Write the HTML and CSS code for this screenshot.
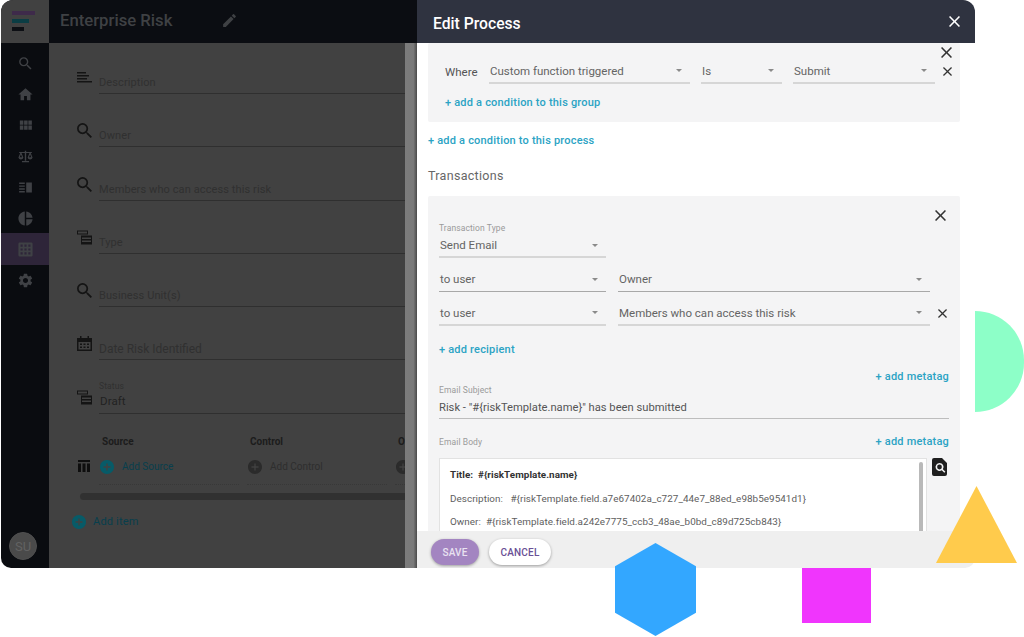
FILE: index.html
```html
<!DOCTYPE html>
<html lang="en">
<head>
    <meta charset="UTF-8">
    <meta name="viewport" content="width=device-width, initial-scale=1.0">
    <title>Edit Process</title>
    <link rel="stylesheet" href="styles.css">
</head>
<body>

    <!-- shared icons -->
    <svg class="icon-defs" width="0" height="0">
        <symbol id="i-search" viewBox="0 0 24 24"><path d="M15.5 14h-.79l-.28-.27A6.471 6.471 0 0 0 16 9.5 6.5 6.5 0 1 0 9.5 16c1.61 0 3.09-.59 4.23-1.57l.27.28v.79l5 4.99L20.49 19l-4.99-5zm-6 0C7.01 14 5 11.99 5 9.5S7.01 5 9.5 5 14 7.01 14 9.5 11.99 14 9.5 14z"/></symbol>
        <symbol id="i-search-tight" viewBox="3 3 17.5 17.5"><path d="M15.5 14h-.79l-.28-.27A6.471 6.471 0 0 0 16 9.5 6.5 6.5 0 1 0 9.5 16c1.61 0 3.09-.59 4.23-1.57l.27.28v.79l5 4.99L20.49 19l-4.99-5zm-6 0C7.01 14 5 11.99 5 9.5S7.01 5 9.5 5 14 7.01 14 9.5 11.99 14 9.5 14z"/></symbol>
        <symbol id="i-home" viewBox="0 0 24 24"><path d="M10 20v-6h4v6h5v-8h3L12 3 2 12h3v8z"/></symbol>
        <symbol id="i-module" viewBox="0 0 24 24"><path d="M4 11h5V5H4v6zm0 7h5v-6H4v6zm6 0h5v-6h-5v6zm6 0h5v-6h-5v6zm-6-7h5V5h-5v6zm6-6v6h5V5h-5z"/></symbol>
        <symbol id="i-scale" viewBox="0 0 24 24"><path d="M11 4h2v1.5h8V7h-1.6l2.6 6.5a3.6 3.6 0 0 1-7 0L17.600 7H13v11h-2V7H6.400L9 13.500a3.600 3.600 0 0 1-7 0L4.600 7H3V5.500h8V4zM5.500 9 3.900 13h3.200L5.500 9zm13 0-1.600 4h3.200l-1.600-4zM7 18.500h10V20H7z"/></symbol>
        <symbol id="i-book" viewBox="0 0 24 24"><path d="M3 5h8v2H3zm0 4h8v2H3zm0 4h8v2H3zm0 4h8v2H3zM13 5h8v14h-8z"/></symbol>
        <symbol id="i-pie" viewBox="0 0 24 24"><path d="M11 2v20c-5.070-.5-9-4.790-9-10s3.930-9.500 9-10zm2.030 0v8.990H22c-.470-4.740-4.240-8.520-8.970-8.990zm0 11.010V22c4.740-.470 8.500-4.250 8.970-8.990h-8.970z"/></symbol>
        <symbol id="i-grid" viewBox="0 0 24 24"><path fill-rule="evenodd" d="M4 2h16a2 2 0 0 1 2 2v16a2 2 0 0 1-2 2H4a2 2 0 0 1-2-2V4a2 2 0 0 1 2-2zm1 3v3h3V5H5zm5.500 0v3h3V5h-3zM16 5v3h3V5h-3zM5 10.500v3h3v-3H5zm5.500 0v3h3v-3h-3zm5.500 0v3h3v-3h-3zM5 16v3h3v-3H5zm5.500 0v3h3v-3h-3zm5.500 0v3h3v-3h-3z"/></symbol>
        <symbol id="i-gear" viewBox="0 0 24 24"><path d="M19.140 12.940c.04-.3.06-.61.06-.94 0-.32-.02-.64-.07-.94l2.030-1.580a.49.49 0 0 0 .12-.61l-1.920-3.320a.488.488 0 0 0-.59-.29l-2.390.96c-.5-.38-1.030-.7-1.620-.94l-.36-2.540a.484.484 0 0 0-.48-.41h-3.840c-.24 0-.43.17-.47.41l-.36 2.540c-.59.24-1.130.57-1.620.94l-2.390-.96c-.22-.08-.47 0-.59.22L2.740 8.870c-.12.21-.08.47.12.61l2.030 1.580c-.05.3-.09.63-.09.94s.02.64.07.94l-2.030 1.580a.49.49 0 0 0-.12.61l1.920 3.320c.12.22.37.29.59.22l2.390-.96c.5.38 1.030.7 1.620.94l.36 2.540c.05.24.24.41.48.41h3.840c.24 0 .44-.17.47-.41l.36-2.540c.59-.24 1.130-.56 1.620-.94l2.390.96c.22.08.47 0 .59-.22l1.920-3.320c.12-.22.07-.47-.12-.61l-2.010-1.580zM12 15.600c-1.980 0-3.600-1.620-3.600-3.600s1.620-3.600 3.600-3.600 3.600 1.620 3.600 3.600-1.620 3.600-3.600 3.600z"/></symbol>
        <symbol id="i-edit" viewBox="0 0 24 24"><path d="M3 17.250V21h3.750L17.810 9.940l-3.750-3.750L3 17.250zM20.710 7.040a.996.996 0 0 0 0-1.410l-2.340-2.340a.996.996 0 0 0-1.410 0l-1.830 1.830 3.750 3.750 1.830-1.830z"/></symbol>
        <symbol id="i-close" viewBox="5 5 14 14"><path d="M19 6.410 17.590 5 12 10.590 6.410 5 5 6.410 10.590 12 5 17.590 6.410 19 12 13.410 17.590 19 19 17.590 13.410 12z"/></symbol>
        <symbol id="i-add" viewBox="2 2 20 20"><path d="M12 2C6.480 2 2 6.480 2 12s4.480 10 10 10 10-4.480 10-10S17.520 2 12 2zm5 11h-4v4h-2v-4H7v-2h4V7h2v4h4v2z"/></symbol>
        <symbol id="i-lines" viewBox="0 0 15 15"><path d="M0 2h9v1.500H0zM0 5h12v1.500H0zM0 8h10v1.500H0zM0 11h15v1.500H0z"/></symbol>
        <symbol id="i-stack" viewBox="0 0 15 14"><path d="M0 0h11v4H0zm1 1v2h9V1zM4 5h11v9H4zm1 2v1.500h9V7zm0 3v1.500h9V10z" fill-rule="evenodd"/></symbol>
        <symbol id="i-calendar" viewBox="0 0 15 15"><path fill-rule="evenodd" d="M3 0h1.500v2h6V0H12v2h3v13H0V2h3zM1.500 6v7.500h12V6zM3 7.500h2V9H3zm3.500 0h2V9h-2zm3.500 0h2V9h-2zM3 10.500h2V12H3zm3.500 0h2V12h-2zm3.500 0h2V12h-2z"/></symbol>
        <symbol id="i-columns" viewBox="0 0 12 12"><path d="M0 0h12v2H0zM0 3.500h3V12H0zM4.500 3.500h3V12h-3zM9 3.500h3V12H9z"/></symbol>
    </svg>

    <div class="app">
        <!-- left nav -->
        <nav class="sidebar">
            <div class="logo">
                <span class="logo-bar logo-bar-1"></span>
                <span class="logo-bar logo-bar-2"></span>
                <span class="logo-bar logo-bar-3"></span>
            </div>
            <div class="nav-list">
                <div class="nav-item"><svg class="nav-icon"><use href="#i-search"/></svg></div>
                <div class="nav-item"><svg class="nav-icon"><use href="#i-home"/></svg></div>
                <div class="nav-item"><svg class="nav-icon"><use href="#i-module"/></svg></div>
                <div class="nav-item"><svg class="nav-icon"><use href="#i-scale"/></svg></div>
                <div class="nav-item"><svg class="nav-icon"><use href="#i-book"/></svg></div>
                <div class="nav-item"><svg class="nav-icon"><use href="#i-pie"/></svg></div>
                <div class="nav-item active"><svg class="nav-icon"><use href="#i-grid"/></svg></div>
                <div class="nav-item"><svg class="nav-icon"><use href="#i-gear"/></svg></div>
            </div>
            <div class="avatar">SU</div>
        </nav>

        <!-- page behind the dialog -->
        <div class="page">
            <header class="page-head">
                <h1 class="page-title">Enterprise Risk</h1>
                <svg class="page-edit"><use href="#i-edit"/></svg>
            </header>
            <div class="page-body">
                <main class="form">
                    <div class="field">
                        <svg class="field-icon"><use href="#i-lines"/></svg>
                        <div class="field-input">Description</div>
                    </div>
                    <div class="field">
                        <svg class="field-icon"><use href="#i-search-tight"/></svg>
                        <div class="field-input">Owner</div>
                    </div>
                    <div class="field">
                        <svg class="field-icon"><use href="#i-search-tight"/></svg>
                        <div class="field-input">Members who can access this risk</div>
                    </div>
                    <div class="field">
                        <svg class="field-icon"><use href="#i-stack"/></svg>
                        <div class="field-input">Type</div>
                    </div>
                    <div class="field">
                        <svg class="field-icon"><use href="#i-search-tight"/></svg>
                        <div class="field-input">Business Unit(s)</div>
                    </div>
                    <div class="field">
                        <svg class="field-icon"><use href="#i-calendar"/></svg>
                        <div class="field-input large">Date Risk Identified</div>
                    </div>
                    <div class="field">
                        <svg class="field-icon"><use href="#i-stack"/></svg>
                        <div class="field-input filled">
                            <span class="field-label">Status</span>
                            <span class="field-value">Draft</span>
                        </div>
                    </div>

                    <div class="items">
                        <svg class="items-icon"><use href="#i-columns"/></svg>
                        <div class="item-col">
                            <div class="item-head">Source</div>
                            <div class="item-add"><svg class="add-icon"><use href="#i-add"/></svg>Add Source</div>
                        </div>
                        <div class="item-col off">
                            <div class="item-head">Control</div>
                            <div class="item-add"><svg class="add-icon"><use href="#i-add"/></svg>Add Control</div>
                        </div>
                        <div class="item-col off">
                            <div class="item-head">Owner</div>
                            <div class="item-add"><svg class="add-icon"><use href="#i-add"/></svg>Add Owner</div>
                        </div>
                    </div>
                    <div class="items-scroll"></div>
                    <div class="add-item"><svg class="add-icon"><use href="#i-add"/></svg>Add item</div>
                </main>
                <div class="page-scroll"></div>
            </div>
        </div>

        <!-- dialog -->
        <section class="dialog">
            <header class="dialog-head">
                <h2 class="dialog-title">Edit Process</h2>
                <svg class="x-icon x-white"><use href="#i-close"/></svg>
            </header>

            <div class="dialog-body">
                <div class="panel panel-where">
                    <div class="panel-close"><svg class="x-icon"><use href="#i-close"/></svg></div>
                    <div class="where-row">
                        <span class="where-label">Where</span>
                        <div class="select w-201"><span>Custom function triggered</span><i class="caret"></i></div>
                        <div class="select w-81"><span>Is</span><i class="caret"></i></div>
                        <div class="select w-142"><span>Submit</span><i class="caret"></i></div>
                        <svg class="x-icon x-small"><use href="#i-close"/></svg>
                    </div>
                    <a class="link link-group">+ add a condition to this group</a>
                </div>

                <a class="link link-process">+ add a condition to this process</a>
                <h3 class="section-title">Transactions</h3>

                <div class="panel panel-tx">
                    <div class="panel-close tx-close"><svg class="x-icon"><use href="#i-close"/></svg></div>
                    <div class="small-label">Transaction Type</div>
                    <div class="select w-167 tx-type"><span>Send Email</span><i class="caret"></i></div>
                    <div class="tx-row">
                        <div class="select w-167 dark"><span>to user</span><i class="caret"></i></div>
                        <div class="select w-312 dark"><span>Owner</span><i class="caret"></i></div>
                    </div>
                    <div class="tx-row">
                        <div class="select w-167"><span>to user</span><i class="caret"></i></div>
                        <div class="select w-312"><span>Members who can access this risk</span><i class="caret"></i></div>
                        <svg class="x-icon x-small"><use href="#i-close"/></svg>
                    </div>
                    <a class="link link-recipient">+ add recipient</a>
                    <div class="meta-row"><a class="link">+ add metatag</a></div>
                    <div class="small-label">Email Subject</div>
                    <div class="subject">Risk - "#{riskTemplate.name}" has been submitted</div>
                    <div class="body-label-row">
                        <span class="small-label">Email Body</span>
                        <a class="link">+ add metatag</a>
                    </div>
                    <div class="editor-row">
                        <div class="editor">
                            <p class="editor-title">Title:&nbsp; #{riskTemplate.name}</p>
                            <p>Description:&nbsp;&nbsp; #{riskTemplate.field.a7e67402a_c727_44e7_88ed_e98b5e9541d1}</p>
                            <p>Owner:&nbsp; #{riskTemplate.field.a242e7775_ccb3_48ae_b0bd_c89d725cb843}</p>
                            <div class="editor-scroll"></div>
                        </div>
                        <svg class="preview-icon" viewBox="0 0 15 18"><path fill-rule="evenodd" d="M2 0h8l5 5v11a2 2 0 0 1-2 2H2a2 2 0 0 1-2-2V2a2 2 0 0 1 2-2zm5.500 5a4 4 0 1 0 2.300 7.300l2.500 2.500 1.100-1.100-2.500-2.500A4 4 0 0 0 7.500 5zm0 1.600a2.400 2.400 0 1 1 0 4.800 2.400 2.400 0 0 1 0-4.800z"/></svg>
                    </div>
                </div>
            </div>

            <footer class="dialog-foot">
                <button class="btn btn-save">SAVE</button>
                <button class="btn btn-cancel">CANCEL</button>
            </footer>
        </section>
    </div>

    <!-- decorative shapes around the screenshot -->
    <div class="shape shape-half"></div>
    <div class="shape shape-hex"></div>
    <div class="shape shape-square"></div>
    <div class="shape shape-tri"></div>

</body>
</html>
```

FILE: styles.css
```css
:root {
    --color-link: #2ba3c4;
    --color-panel: #f4f4f5;
    --color-text: #616161;
    --color-page: #414141;
    --font-family: Roboto, "Liberation Sans", Arial, sans-serif;
}

html, body {
    margin: 0;
    height: 100%;
    overflow: hidden;
    background-color: #fff;
    font-family: var(--font-family);
}

.icon-defs {
    display: block;
}

.app {
    display: flex;
    width: 974px;
    height: 568px;
    margin-left: 1px;
    overflow: hidden;
    border-radius: 12px 12px 10px 10px;
}

/* --- sidebar --- */
.sidebar {
    display: flex;
    flex-direction: column;
    flex-shrink: 0;
    width: 48px;
    background-color: #0a0c10;
}

.logo {
    display: flex;
    flex-direction: column;
    gap: 4px;
    height: 43px;
    padding: 11px 0 0 11px;
    box-sizing: border-box;
    background-color: #414141;
}

.logo-bar {
    display: block;
    height: 4px;
}
.logo-bar-1 { width: 23px; background-color: #3e2a4a; }
.logo-bar-2 { width: 17px; background-color: #0b3d44; }
.logo-bar-3 { width: 12px; background-color: #0d0f14; }

.nav-list {
    padding-top: 5px;
}

.nav-item {
    display: flex;
    align-items: center;
    justify-content: center;
    height: 31px;
}
.nav-item.active {
    height: 32px;
    margin-top: -1px;
    background-color: #2e2539;
}

.nav-icon {
    width: 17px;
    height: 17px;
    fill: #3f4145;
}

.avatar {
    display: flex;
    align-items: center;
    justify-content: center;
    width: 28px;
    height: 28px;
    margin: auto 0 8px 8px;
    border-radius: 50%;
    background-color: #4a4a4a;
    border: 1px solid #505050;
    box-sizing: border-box;
    color: #626262;
    font-size: 13px;
}

/* --- page behind the dialog --- */
.page {
    display: flex;
    flex-direction: column;
    width: 368px;
    flex-shrink: 0;
    background-color: var(--color-page);
}

.page-head {
    display: flex;
    align-items: center;
    height: 43px;
    padding: 0 0 2px 11px;
    box-sizing: border-box;
    flex-shrink: 0;
    background-color: #0b0d12;
}

.page-title {
    width: 161px;
    margin: 0;
    color: #3f4144;
    font-size: 16.700px;
    font-weight: 500;
}

.page-edit {
    width: 17px;
    height: 17px;
    fill: #3f4144;
}

.page-body {
    display: flex;
    flex: 1;
    min-height: 0;
}

.form {
    width: 356px;
    padding: 8px 0 0 28px;
    box-sizing: border-box;
    overflow: hidden;
    flex-shrink: 0;
}

.page-scroll {
    width: 12px;
    background: linear-gradient(90deg, #7c7c7c 0, #7a7a7a 70%, #4a4a4a 100%);
}

.field {
    display: flex;
    align-items: flex-end;
    height: 43px;
    margin-bottom: 10.250px;
}

.field-icon {
    flex-shrink: 0;
    width: 15px;
    height: 15px;
    margin: 0 7px 9px 0;
    fill: #141414;
}

.field-input {
    flex: 1;
    padding-bottom: 4px;
    border-bottom: 1px solid #2f2f2f;
    color: #303030;
    font-size: 11px;
    letter-spacing: 0.1px;
    white-space: nowrap;
}
.field-input.large {
    padding-bottom: 3px;
    font-size: 12px;
    letter-spacing: 0;
}

.field-input.filled {
    display: flex;
    flex-direction: column;
    padding-bottom: 5px;
    color: #222;
}

.field-label {
    margin-bottom: 3px;
    font-size: 8.500px;
    color: #303030;
}

.field-value {
    padding-left: 1px;
    font-size: 11.500px;
}

.items {
    display: flex;
    margin-top: 22px;
    width: 400px;
}

.items-icon {
    flex-shrink: 0;
    width: 12px;
    height: 12px;
    margin: 24px 9px 0 1px;
    fill: #0e0e0e;
}

.item-col {
    flex-shrink: 0;
    width: 140px;
    margin-right: 8px;
    border-bottom: 1px dotted #383838;
    height: 49px;
    box-sizing: border-box;
}

.item-head {
    padding-left: 3px;
    color: #1c1c1c;
    font-size: 10px;
    font-weight: 700;
}

.item-add {
    display: flex;
    align-items: center;
    gap: 8px;
    margin-top: 13px;
    padding-left: 1px;
    color: #083f4d;
    font-size: 10px;
}

.item-col.off .item-add {
    color: #2e2e2e;
}

.add-icon {
    flex-shrink: 0;
    width: 14px;
    height: 14px;
    fill: #075b68;
}

.item-col.off .add-icon {
    fill: #2b2b2b;
}

.items-scroll {
    height: 7px;
    margin: 8px -1px 0 3px;
    border-radius: 4px 0 0 4px;
    background-color: #313131;
}

.add-item {
    display: flex;
    align-items: center;
    gap: 7px;
    margin: 15px 0 0 -5px;
    color: #083f4d;
    font-size: 11px;
    letter-spacing: 0.2px;
}

/* --- dialog --- */
.dialog {
    display: flex;
    flex-direction: column;
    flex: 1;
    min-width: 0;
    background-color: #fff;
}

.dialog-head {
    display: flex;
    align-items: center;
    justify-content: space-between;
    flex-shrink: 0;
    height: 43px;
    padding: 0 15px 0 16px;
    box-sizing: border-box;
    background-color: #2f3340;
}

.dialog-title {
    margin: 4px 0 0;
    color: #fff;
    font-size: 15.700px;
    font-weight: 500;
}

.x-icon {
    display: block;
    flex-shrink: 0;
    width: 11px;
    height: 11px;
    fill: #333;
}
.x-white {
    fill: #fff;
}
.x-small {
    width: 9px;
    height: 9px;
}

.dialog-body {
    flex: 1;
    min-height: 0;
    padding: 0 15px 0 11px;
    overflow: hidden;
}

.panel {
    border-radius: 2px;
    background-color: var(--color-panel);
}

.panel-where {
    height: 79px;
    padding-left: 17px;
    box-sizing: border-box;
}

.panel-close {
    display: flex;
    justify-content: flex-end;
    height: 12px;
    padding: 4px 8px 0 0;
}

.where-row {
    display: flex;
    align-items: center;
    gap: 11px;
}

.where-label {
    width: 33px;
    color: #555;
    font-size: 11.500px;
}

.where-row .x-small {
    margin: 0 0 0 -3px;
}

.select {
    display: flex;
    align-items: center;
    justify-content: space-between;
    flex-shrink: 0;
    height: 25px;
    padding: 0 8px 0 1px;
    box-sizing: border-box;
    border-bottom: 2px solid #d6d6d6;
    color: #646464;
    font-size: 11.500px;
    white-space: nowrap;
}
.select.dark {
    border-bottom: 1px solid #a8a8a8;
}

.w-201 { width: 201px; }
.w-81 { width: 81px; }
.w-142 { width: 142px; }
.w-167 { width: 167px; }
.w-312 { width: 312px; }

.caret {
    display: block;
    width: 0;
    height: 0;
    border-left: 3.500px solid transparent;
    border-right: 3.500px solid transparent;
    border-top: 3.500px solid #8a8a8a;
}

.link {
    display: block;
    height: 14px;
    color: var(--color-link);
    font-size: 11px;
    font-weight: 500;
    line-height: 14px;
    letter-spacing: 0.2px;
    white-space: nowrap;
}

.link-group {
    margin-top: 12px;
}

.link-process {
    margin-top: 12px;
}

.section-title {
    height: 16px;
    margin: 20px 0 12px;
    color: #666;
    font-size: 12.500px;
    font-weight: 400;
    line-height: 16px;
    letter-spacing: 0.3px;
}

.panel-tx {
    padding: 0 11px;
    height: 400px;
}

.tx-close {
    height: 12px;
    padding: 14px 3px 0 0;
}

.small-label {
    height: 12px;
    color: #9a9a9a;
    font-size: 8.500px;
    line-height: 12px;
    letter-spacing: 0.1px;
}

.tx-type {
    height: 24px;
}

.tx-row {
    display: flex;
    align-items: center;
    gap: 12px;
    margin-top: 9px;
}

.tx-row .x-small {
    margin-left: -4px;
}

.link-recipient {
    margin-top: 17px;
}

.meta-row {
    display: flex;
    justify-content: flex-end;
    margin-top: 13px;
}

.subject {
    height: 23px;
    box-sizing: border-box;
    border-bottom: 1px solid #bdbdbd;
    color: #555;
    font-size: 11.200px;
    line-height: 24px;
    white-space: nowrap;
}

.body-label-row {
    display: flex;
    align-items: center;
    justify-content: space-between;
    height: 16px;
    margin-top: 15px;
}

.editor-row {
    display: flex;
    gap: 5px;
    margin-top: 8px;
}

.editor {
    position: relative;
    width: 488px;
    height: 120px;
    padding: 9px 10px;
    box-sizing: border-box;
    border: 1px solid #e2e2e2;
    background-color: #fff;
    color: #5e5e5e;
    font-size: 9.900px;
    letter-spacing: 0.05px;
}

.editor p {
    height: 13px;
    margin: 0 0 10.500px;
    line-height: 13px;
    white-space: nowrap;
}

.editor p.editor-title {
    color: #333;
    font-weight: 700;
}

.editor-scroll {
    position: absolute;
    top: 3px;
    right: 3px;
    width: 4px;
    height: 100px;
    border-radius: 2px;
    background-color: #b9b9b9;
}

.preview-icon {
    width: 15px;
    height: 18px;
    fill: #1f1f1f;
}

.dialog-foot {
    display: flex;
    align-items: flex-start;
    gap: 10px;
    flex-shrink: 0;
    height: 37px;
    padding: 8px 0 0 14px;
    box-sizing: border-box;
    background-color: #efefef;
}

.btn {
    height: 26px;
    padding: 0;
    border: none;
    border-radius: 13px;
    font-family: var(--font-family);
    font-size: 10px;
    font-weight: 500;
    letter-spacing: 0.2px;
    box-shadow: 0 1px 3px rgba(0, 0, 0, 0.35);
}
.btn-save {
    width: 48px;
    background-color: #a385c1;
    color: #e9e2f1;
}
.btn-cancel {
    width: 62px;
    background-color: #fff;
    color: #6a5096;
}

/* --- decorative shapes --- */
.shape {
    position: absolute;
}

.shape-half {
    left: 975px;
    top: 311px;
    width: 49px;
    height: 101px;
    border-radius: 0 51px 51px 0;
    background-color: #8dffc8;
}

.shape-hex {
    left: 615px;
    top: 543px;
    width: 81px;
    height: 93px;
    background-color: #33a7ff;
    clip-path: polygon(50% 0, 100% 25%, 100% 75%, 50% 100%, 0 75%, 0 25%);
}

.shape-square {
    left: 802px;
    top: 568px;
    width: 69px;
    height: 55px;
    background-color: #f035fd;
}

.shape-tri {
    left: 936px;
    top: 486px;
    width: 81px;
    height: 77px;
    background-color: #ffcb4c;
    clip-path: polygon(50% 0, 100% 100%, 0 100%);
}
```
